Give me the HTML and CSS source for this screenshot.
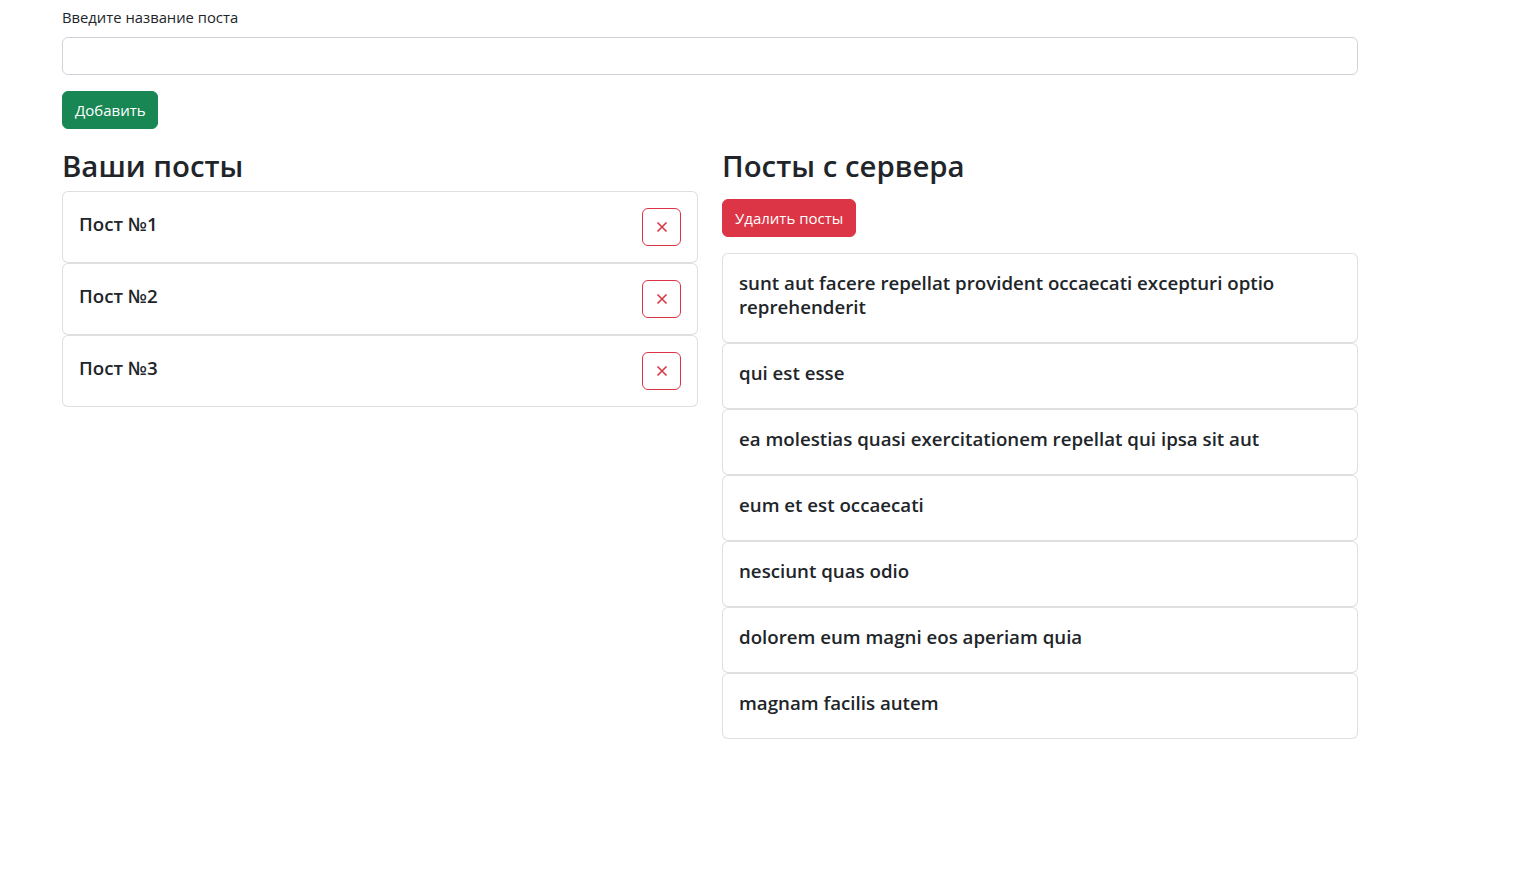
FILE: index.html
```html
<!DOCTYPE html>
<html lang="ru">
<head>
<meta charset="utf-8">
<title>Посты</title>
<link rel="stylesheet" href="styles.css">
</head>
<body>
<div class="container">
  <form class="add-form">
    <label class="form-label" for="title">Введите название поста</label>
    <input class="form-control" id="title" type="text">
    <button class="btn btn-success" type="button">Добавить</button>
  </form>
  <div class="row">
    <div class="col">
      <h2 class="heading">Ваши посты</h2>
      <div class="card">
        <div class="card-body flex">
          <h5 class="card-title">Пост №1</h5>
          <button class="btn btn-del" type="button"><svg width="12" height="12" viewBox="0 0 12 12"><path d="M1.5 1.5 L10.5 10.5 M10.5 1.5 L1.5 10.5" stroke="#dc3545" stroke-width="1.6" fill="none"/></svg></button>
        </div>
      </div>
      <div class="card">
        <div class="card-body flex">
          <h5 class="card-title">Пост №2</h5>
          <button class="btn btn-del" type="button"><svg width="12" height="12" viewBox="0 0 12 12"><path d="M1.5 1.5 L10.5 10.5 M10.5 1.5 L1.5 10.5" stroke="#dc3545" stroke-width="1.6" fill="none"/></svg></button>
        </div>
      </div>
      <div class="card">
        <div class="card-body flex">
          <h5 class="card-title">Пост №3</h5>
          <button class="btn btn-del" type="button"><svg width="12" height="12" viewBox="0 0 12 12"><path d="M1.5 1.5 L10.5 10.5 M10.5 1.5 L1.5 10.5" stroke="#dc3545" stroke-width="1.6" fill="none"/></svg></button>
        </div>
      </div>
    </div>
    <div class="col">
      <h2 class="heading">Посты с сервера</h2>
      <button class="btn btn-danger" type="button">Удалить посты</button>
      <div class="server-list">
        <div class="card"><div class="card-body"><h5 class="card-title">sunt aut facere repellat provident occaecati excepturi optio reprehenderit</h5></div></div>
        <div class="card"><div class="card-body"><h5 class="card-title">qui est esse</h5></div></div>
        <div class="card"><div class="card-body"><h5 class="card-title">ea molestias quasi exercitationem repellat qui ipsa sit aut</h5></div></div>
        <div class="card"><div class="card-body"><h5 class="card-title">eum et est occaecati</h5></div></div>
        <div class="card"><div class="card-body"><h5 class="card-title">nesciunt quas odio</h5></div></div>
        <div class="card"><div class="card-body"><h5 class="card-title">dolorem eum magni eos aperiam quia</h5></div></div>
        <div class="card"><div class="card-body"><h5 class="card-title">magnam facilis autem</h5></div></div>
      </div>
    </div>
  </div>
</div>
</body>
</html>
```
FILE: styles.css
```css
* { box-sizing: border-box; }
html, body { margin: 0; padding: 0; }
body {
  font-family: "Open Sans", "Noto Sans", "Liberation Sans", sans-serif;
  font-size: 16px;
  line-height: 1.5;
  color: #212529;
  background: #fff;
}
.container {
  width: 1296px;
  margin-left: 62px;
}
.add-form {
  display: flex;
  flex-direction: column;
  align-items: flex-start;
  padding-top: 7px;
}
.form-label {
  font-size: 14.8px;
  line-height: 21px;
  margin-bottom: 9px;
}
.form-control {
  width: 100%;
  height: 38px;
  border: 1px solid #ced4da;
  border-radius: 6px;
  padding: 6px 12px;
  font: inherit;
}
.btn {
  font-family: inherit;
  font-size: 15px;
  line-height: 24px;
  height: 38px;
  padding: 6px 12px;
  border: 1px solid transparent;
  border-radius: 6px;
  cursor: pointer;
  color: #fff;
  white-space: nowrap;
}
.btn-success {
  margin-top: 16px;
  background: #198754;
  border-color: #198754;
  width: 96px;
}
.btn-danger {
  margin-top: 8px;
  background: #dc3545;
  border-color: #dc3545;
  padding: 6px 12px;
}
.btn-del {
  width: 39px;
  background: #fff;
  border-color: #dc3545;
  display: flex;
  align-items: center;
  justify-content: center;
  padding: 0;
}
.row {
  display: grid;
  grid-template-columns: 1fr 1fr;
  column-gap: 24px;
  margin-top: 16px;
}
.col {
  display: flex;
  flex-direction: column;
  align-items: flex-start;
}
.heading {
  font-size: 29.4px;
  font-weight: 600;
  line-height: 38px;
  padding-top: 2px;
  margin: 0 0 6px;
}
.card {
  width: 100%;
  border: 1px solid rgba(0, 0, 0, 0.125);
  border-radius: 6px;
  background: #fff;
}
.card-body {
  padding: 16px;
}
.flex {
  display: flex;
  justify-content: space-between;
  align-items: center;
}
.card-title {
  font-size: 18.7px;
  font-weight: 600;
  line-height: 24px;
  padding-top: 1px;
  margin: 0 0 7px;
}
.server-list {
  width: 100%;
  margin-top: 16px;
}
```
